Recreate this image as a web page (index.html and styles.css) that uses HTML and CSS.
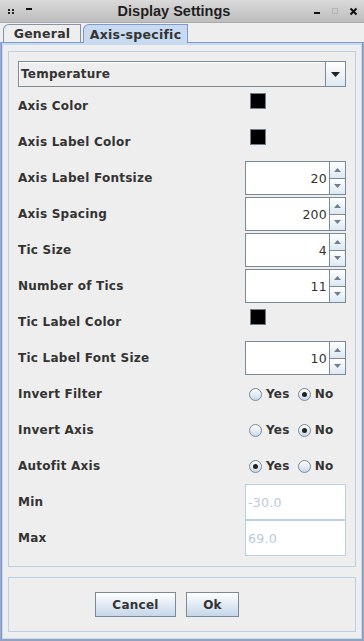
FILE: index.html
```html
<!DOCTYPE html>
<html lang="en">
<head>
    <meta charset="UTF-8">
    <title>Display Settings</title>
    <link rel="stylesheet" href="styles.css">
</head>
<body>
    <div class="window">
        <div class="titlebar">
            <svg class="tb-left" width="36" height="22" viewBox="0 0 36 22">
                <rect x="8" y="9" width="2" height="2" fill="#222"/>
                <rect x="12" y="9" width="2" height="2" fill="#222"/>
                <rect x="8" y="12" width="2" height="2" fill="#222"/>
                <rect x="12" y="12" width="2" height="2" fill="#222"/>
                <rect x="26" y="8" width="6" height="2" fill="#111"/>
            </svg>
            <div class="title">Display Settings</div>
            <svg class="tb-right" width="52" height="22" viewBox="0 0 52 22">
                <rect x="2" y="12" width="6" height="2" fill="#111"/>
                <rect x="20.5" y="8.5" width="5" height="5" fill="none" stroke="#b4b4b4"/>
                <path d="M38.5 8.5 L44.5 14.5 M44.5 8.5 L38.5 14.5" stroke="#111" stroke-width="2"/>
            </svg>
        </div>

        <div class="tabs">
            <div class="tab tab-general">General</div>
            <div class="tab tab-active">Axis-specific</div>
        </div>

        <div class="content">
            <div class="panel settings">
                <div class="combo">
                    <div class="combo-text">Temperature</div>
                    <div class="combo-btn">
                        <svg width="9" height="5" viewBox="0 0 9 5"><polygon points="0,0 9,0 4.5,5" fill="#222"/></svg>
                    </div>
                </div>

                <div class="row">
                    <span>Axis Color</span>
                    <div class="swatch"></div>
                </div>
                <div class="row">
                    <span>Axis Label Color</span>
                    <div class="swatch"></div>
                </div>
                <div class="row">
                    <span>Axis Label Fontsize</span>
                    <div class="spinner">
                        <div class="spin-value">20</div>
                        <div class="spin-btns">
                            <div class="spin-btn"><svg width="7" height="4" viewBox="0 0 7 4"><polygon points="0,4 7,4 3.5,0" fill="#6f7f90"/></svg></div>
                            <div class="spin-btn"><svg width="7" height="4" viewBox="0 0 7 4"><polygon points="0,0 7,0 3.5,4" fill="#6f7f90"/></svg></div>
                        </div>
                    </div>
                </div>
                <div class="row">
                    <span>Axis Spacing</span>
                    <div class="spinner">
                        <div class="spin-value">200</div>
                        <div class="spin-btns">
                            <div class="spin-btn"><svg width="7" height="4" viewBox="0 0 7 4"><polygon points="0,4 7,4 3.5,0" fill="#6f7f90"/></svg></div>
                            <div class="spin-btn"><svg width="7" height="4" viewBox="0 0 7 4"><polygon points="0,0 7,0 3.5,4" fill="#6f7f90"/></svg></div>
                        </div>
                    </div>
                </div>
                <div class="row">
                    <span>Tic Size</span>
                    <div class="spinner">
                        <div class="spin-value">4</div>
                        <div class="spin-btns">
                            <div class="spin-btn"><svg width="7" height="4" viewBox="0 0 7 4"><polygon points="0,4 7,4 3.5,0" fill="#6f7f90"/></svg></div>
                            <div class="spin-btn"><svg width="7" height="4" viewBox="0 0 7 4"><polygon points="0,0 7,0 3.5,4" fill="#6f7f90"/></svg></div>
                        </div>
                    </div>
                </div>
                <div class="row">
                    <span>Number of Tics</span>
                    <div class="spinner">
                        <div class="spin-value">11</div>
                        <div class="spin-btns">
                            <div class="spin-btn"><svg width="7" height="4" viewBox="0 0 7 4"><polygon points="0,4 7,4 3.5,0" fill="#6f7f90"/></svg></div>
                            <div class="spin-btn"><svg width="7" height="4" viewBox="0 0 7 4"><polygon points="0,0 7,0 3.5,4" fill="#6f7f90"/></svg></div>
                        </div>
                    </div>
                </div>
                <div class="row">
                    <span>Tic Label Color</span>
                    <div class="swatch"></div>
                </div>
                <div class="row">
                    <span>Tic Label Font Size</span>
                    <div class="spinner">
                        <div class="spin-value">10</div>
                        <div class="spin-btns">
                            <div class="spin-btn"><svg width="7" height="4" viewBox="0 0 7 4"><polygon points="0,4 7,4 3.5,0" fill="#6f7f90"/></svg></div>
                            <div class="spin-btn"><svg width="7" height="4" viewBox="0 0 7 4"><polygon points="0,0 7,0 3.5,4" fill="#6f7f90"/></svg></div>
                        </div>
                    </div>
                </div>
                <div class="row">
                    <span>Invert Filter</span>
                    <div class="radios">
                        <span class="radio"></span><span class="radio-label">Yes</span>
                        <span class="radio checked"></span><span class="radio-label">No</span>
                    </div>
                </div>
                <div class="row">
                    <span>Invert Axis</span>
                    <div class="radios">
                        <span class="radio"></span><span class="radio-label">Yes</span>
                        <span class="radio checked"></span><span class="radio-label">No</span>
                    </div>
                </div>
                <div class="row">
                    <span>Autofit Axis</span>
                    <div class="radios">
                        <span class="radio checked"></span><span class="radio-label">Yes</span>
                        <span class="radio"></span><span class="radio-label">No</span>
                    </div>
                </div>
                <div class="row">
                    <span>Min</span>
                    <div class="field">-30.0</div>
                </div>
                <div class="row">
                    <span>Max</span>
                    <div class="field">69.0</div>
                </div>
            </div>

            <div class="panel buttons">
                <button class="btn btn-cancel">Cancel</button>
                <button class="btn btn-ok">Ok</button>
            </div>
        </div>
    </div>
</body>
</html>
```

FILE: styles.css
```css
* {
    box-sizing: border-box;
}

body {
    margin: 0;
    width: 364px;
    height: 641px;
    overflow: hidden;
    background-color: #eeeeee;
    font-family: "DejaVu Sans", sans-serif;
    font-size: 12px;
    font-weight: bold;
    letter-spacing: 0.25px;
    color: #333333;
}

.window {
    height: 641px;
    display: flex;
    flex-direction: column;
    border-bottom: 2px solid #93a3bf;
}

/* title bar */
.titlebar {
    height: 23px;
    display: flex;
    align-items: center;
    background: linear-gradient(#dadada, #bdbdbd);
    border-bottom: 1px solid #ababab;
}

.tb-left,
.tb-right {
    flex: none;
}

.title {
    flex: 1;
    text-align: center;
    font-family: "Liberation Sans", Arial, sans-serif;
    font-size: 14.5px;
    letter-spacing: 0;
    color: #1e1e1e;
}

/* tabs */
.tabs {
    height: 19px;
    display: flex;
    align-items: flex-end;
    gap: 2px;
    padding-left: 3px;
}

.tab {
    height: 18px;
    display: flex;
    align-items: center;
    justify-content: center;
    border: 1px solid #8294ad;
    border-bottom: none;
    border-top-left-radius: 6px;
    font-size: 12.5px;
}

.tab-general {
    width: 78px;
    background-color: #eeeeee;
}

.tab-active {
    width: 105px;
    height: 19px;
    margin-bottom: -1px;
    position: relative;
    z-index: 1;
    background-color: #c8daf0;
    border-color: #7d98cf;
}

.content {
    flex: 1;
    margin: 0 1px;
    padding: 8px 6px 6px;
    display: flex;
    flex-direction: column;
    gap: 10px;
    border: 1px solid #7d98cf;
    border-bottom: none;
    box-shadow: inset 0 0 0 1px #c8daf0, inset 0 2px 0 #c8daf0, -1px 0 #a0acc4, 1px 0 #a0acc4;
}

.panel {
    border: 1px solid #b8cfe5;
}

.settings {
    padding: 9px 9px 10px;
}

/* combo box */
.combo {
    height: 26px;
    margin-bottom: 1px;
    display: flex;
    border: 1px solid #7a8a99;
}

.combo-text {
    flex: 1;
    display: flex;
    align-items: center;
    padding-left: 2px;
    box-shadow: inset 1px 1px #ffffff;
}

.combo-btn {
    width: 20px;
    display: flex;
    align-items: center;
    justify-content: center;
    border-left: 1px solid #7a8a99;
    background: linear-gradient(#ffffff, #dde8f3);
}

/* rows */
.row {
    height: 36px;
    display: grid;
    grid-template-columns: 227px 101px;
    align-items: center;
}

.swatch {
    width: 16px;
    height: 16px;
    margin-left: 5px;
    align-self: start;
    margin-top: 5px;
    background-color: #000000;
    border: 1px solid #6f7f90;
}

.spinner {
    height: 34px;
    display: flex;
    background-color: #ffffff;
    border: 1px solid #7a8a99;
}

.spin-value {
    flex: 1;
    display: flex;
    align-items: center;
    justify-content: flex-end;
    padding-right: 2px;
    font-weight: normal;
    font-size: 12.5px;
}

.spin-btns {
    width: 16px;
    display: flex;
    flex-direction: column;
    border-left: 1px solid #7a8a99;
}

.spin-btn {
    flex: 1;
    display: flex;
    align-items: center;
    justify-content: center;
    background: linear-gradient(#ffffff, #dde8f3);
}

.spin-btn + .spin-btn {
    border-top: 1px solid #7a8a99;
}

/* radio buttons */
.radios {
    display: flex;
    align-items: center;
    padding-left: 4px;
}

.radio {
    width: 13px;
    height: 13px;
    display: flex;
    align-items: center;
    justify-content: center;
    border: 1px solid #7a8a99;
    border-radius: 50%;
    background: linear-gradient(#ffffff, #c9d9ea);
}

.radio.checked::after {
    content: '';
    width: 5px;
    height: 5px;
    border-radius: 50%;
    background-color: #222222;
}

.radio-label {
    margin-left: 4px;
    margin-right: 8px;
}

.field {
    height: 36px;
    display: flex;
    align-items: center;
    padding-left: 2px;
    background-color: #ffffff;
    border: 1px solid #b8cfe5;
    color: #b8c9de;
    font-weight: normal;
    font-size: 12.5px;
}

/* bottom buttons */
.buttons {
    height: 55px;
    display: flex;
    align-items: center;
    gap: 10px;
    padding-left: 86px;
}

.btn {
    height: 25px;
    padding: 0;
    border: 1px solid #7a8a99;
    background: linear-gradient(#ffffff, #dce7f2 60%, #c5d7ea);
    font-family: "DejaVu Sans", sans-serif;
    font-size: 12px;
    font-weight: bold;
    letter-spacing: 0.25px;
    color: #333333;
}

.btn-cancel {
    width: 81px;
}

.btn-ok {
    width: 53px;
}
```
